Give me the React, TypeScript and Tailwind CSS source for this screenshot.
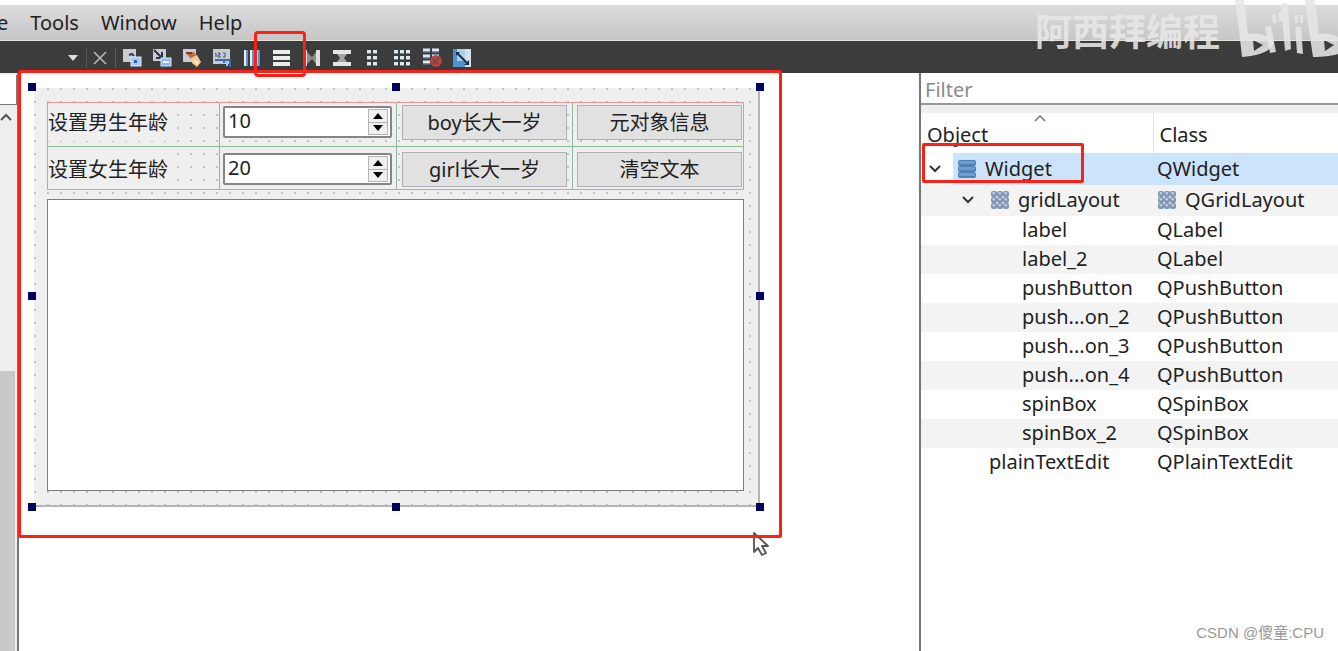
import type { ReactNode } from "react";

const menus = ["Tools", "Window", "Help"];

const tree = [
  { name: "label", type: "QLabel" },
  { name: "label_2", type: "QLabel" },
  { name: "pushButton", type: "QPushButton" },
  { name: "push...on_2", type: "QPushButton" },
  { name: "push...on_3", type: "QPushButton" },
  { name: "push...on_4", type: "QPushButton" },
  { name: "spinBox", type: "QSpinBox" },
  { name: "spinBox_2", type: "QSpinBox" },
];

function GridIcon() {
  return (
    <svg viewBox="0 0 20 20" className="size-5 shrink-0">
      {[1, 7, 13].map((y) =>
        [1, 7, 13].map((x) => (
          <g key={`${x}-${y}`}>
            <rect x={x} y={y} width="6" height="6" rx="2" fill="#8096b4" />
            <rect x={x + 1.5} y={y + 1} width="2.5" height="2.5" rx="1" fill="#c3d1e3" />
          </g>
        )),
      )}
    </svg>
  );
}

function RowsIcon() {
  return (
    <svg viewBox="0 0 20 20" className="size-5 shrink-0">
      {[1, 7, 13].map((y) => (
        <g key={y}>
          <rect x="1" y={y} width="18" height="6" rx="2" fill="#4f80b3" />
          <rect x="2" y={y + 1} width="16" height="3" rx="1" fill="#6c9fd0" />
        </g>
      ))}
    </svg>
  );
}

const tools: { label: string; icon: ReactNode }[] = [
  {
    label: "Edit Widgets",
    icon: (
      <>
        <rect x="1" y="1" width="13" height="13" fill="#c9ccd1" />
        <path d="M7 7l3-1 2 2" stroke="#33415c" strokeWidth="2" fill="none" />
        <rect x="9" y="9" width="10" height="9" fill="#a9c8f5" stroke="#dbe9ff" />
        <rect x="12" y="12" width="3" height="3" fill="#2f5fae" />
      </>
    ),
  },
  {
    label: "Edit Signals/Slots",
    icon: (
      <>
        <rect x="1" y="1" width="13" height="12" fill="#c9ccd1" />
        <path d="M2 2l8 8M10 4v6H4" stroke="#26344f" strokeWidth="2" fill="none" />
        <rect x="9" y="10" width="10" height="8" fill="#8fb8ee" stroke="#d5e5fb" />
        <path d="M11 14h6" stroke="#edf5ff" strokeWidth="2" />
      </>
    ),
  },
  {
    label: "Edit Buddies",
    icon: (
      <>
        <rect x="1" y="1" width="13" height="13" fill="#c9ccd1" />
        <path d="M4 5l8-1 3 5-5 3z" fill="#c4693a" />
        <path d="M4 5h6" stroke="#7c3b24" strokeWidth="2" />
        <path d="M9 10l6-3 4 7-4 5-5-4z" fill="#f6c99a" />
        <path d="M12 12l4 4" stroke="#fff0d8" strokeWidth="2" />
      </>
    ),
  },
  {
    label: "Edit Tab Order",
    icon: (
      <>
        <rect x="1" y="1" width="17" height="15" fill="#c6cbd3" />
        <path d="M3 6l1-1v4M6 5h2v2H6v2h3M11 5h2v4h-2" stroke="#39567f" fill="none" />
        <path d="M3 12h9v3M12 12h6v7" stroke="#3c6bb4" strokeWidth="2" fill="none" />
        <path d="M15 13v5" stroke="#a9c8f5" strokeWidth="2" />
      </>
    ),
  },
  {
    label: "Lay Out Horizontally",
    icon: (
      <>
        {[2, 8, 14].map((x) => (
          <g key={x}>
            <rect x={x} y="2" width="4" height="16" fill="#e8f0f8" />
            <rect x={x + 2} y="2" width="2" height="16" fill="#5d94c8" />
          </g>
        ))}
      </>
    ),
  },
  {
    label: "Lay Out Vertically",
    icon: <path d="M1 4h17M1 10h17M1 16h17" stroke="#ececec" strokeWidth="4" />,
  },
  {
    label: "Lay Out Horizontally in Splitter",
    icon: (
      <>
        <path d="M3 2v16M16 2v16" stroke="#dedede" strokeWidth="4" />
        <path d="M5 4v12l5-5 4 5V4l-4 5z" fill="#8d8d8d" />
      </>
    ),
  },
  {
    label: "Lay Out Vertically in Splitter",
    icon: (
      <>
        <path d="M1 4h18M1 16h18" stroke="#e4e4e4" strokeWidth="4" />
        <path d="M5 6h10l-3 4 3 4H5l3-4z" fill="#a3a3a3" />
      </>
    ),
  },
  {
    label: "Lay Out in a Form",
    icon: (
      <>
        {[2, 8, 14].map((y) => (
          <g key={y}>
            <rect x="5" y={y} width="4" height="3" fill="#dbe9f6" />
            <rect x="11" y={y} width="4" height="3" fill="#dbe9f6" />
            <path d={`M5 ${y + 3.5}h4M11 ${y + 3.5}h4`} stroke="#5c8fbe" />
          </g>
        ))}
      </>
    ),
  },
  {
    label: "Lay Out in a Grid",
    icon: (
      <>
        {[2, 8, 14].map((y) =>
          [2, 8, 14].map((x) => (
            <g key={`${x}-${y}`}>
              <rect x={x} y={y} width="4" height="3" fill="#dbe9f6" />
              <path d={`M${x} ${y + 3.5}h4`} stroke="#5c8fbe" />
            </g>
          )),
        )}
      </>
    ),
  },
  {
    label: "Break Layout",
    icon: (
      <>
        {[1, 7, 13].map((y) => (
          <g key={y}>
            <path d={`M1 ${y + 1}h7M10 ${y + 1}h7`} stroke="#dce9f6" strokeWidth="3" />
            <path d={`M1 ${y + 3}h7M10 ${y + 3}h7`} stroke="#5c8fbe" />
          </g>
        ))}
        <circle cx="14" cy="13" r="6" fill="#b8433c" />
        <path d="M11 16l6-6M11 11l5 5" stroke="#6f4a4e" strokeWidth="1.5" />
      </>
    ),
  },
  {
    label: "Adjust Size",
    icon: (
      <>
        <rect x="1" y="1" width="18" height="18" fill="#4e93cd" />
        <rect x="5" y="1" width="9" height="12" fill="#a9d0ec" />
        <path d="M13 1h6v18h-6z" fill="#d5dfe4" />
        <path d="M5 5l10 10" stroke="#152f4d" strokeWidth="2" />
        <path d="M4 4h4l-4 4zM17 17h-5l5-5z" fill="#152f4d" />
      </>
    ),
  },
];

function Chevron() {
  return (
    <svg viewBox="0 0 12 8" className="w-3 h-2">
      <path d="M1 1l5 5 5-5" stroke="#333" strokeWidth="2" fill="none" />
    </svg>
  );
}

function SpinBox({ id, value }: { id: string; value: number }) {
  return (
    <div className="flex w-[169px] h-8 bg-white border-2 border-[#858585] rounded-xs">
      <input
        id={id}
        type="number"
        defaultValue={value}
        className="flex-1 min-w-0 pl-[3px] pb-0.5 text-xl leading-6 outline-none [appearance:textfield] [&::-webkit-inner-spin-button]:appearance-none"
      />
      <div className="flex flex-col w-5 my-px mr-0.5 border border-[#b5b5b5] divide-y divide-[#b5b5b5] bg-[#f0f0f0]">
        <button aria-label="Increase" className="flex flex-1 items-center justify-center">
          <svg viewBox="0 0 10 6" className="w-2.5 h-1.5">
            <path d="M5 0l5 6H0z" />
          </svg>
        </button>
        <button aria-label="Decrease" className="flex flex-1 items-center justify-center">
          <svg viewBox="0 0 10 6" className="w-2.5 h-1.5">
            <path d="M5 6L0 0h10z" />
          </svg>
        </button>
      </div>
    </div>
  );
}

function FormButton({ children }: { children: ReactNode }) {
  return (
    <button className="w-[165px] h-[35px] bg-[#e1e1e1] border border-[#adb0b6] text-xl leading-6">
      {children}
    </button>
  );
}

function Cell({ className, children }: { className: string; children: ReactNode }) {
  return <div className={`flex border-[#8dbb96] ${className}`}>{children}</div>;
}

function Handle({ className }: { className: string }) {
  return <span className={`absolute size-2 bg-[#000060] ${className}`} />;
}

function Form() {
  return (
    <div className="relative w-[726px] pt-3.5 pb-3.5 pl-[13px] pr-3.5 border-r-2 border-b-2 border-[#b4b4b8] bg-[#efefef] bg-[radial-gradient(circle_at_1px_1px,#c2c2c2_1px,transparent_1px)] bg-[size:13px_13px]">
      <div className="grid grid-cols-[172px_177px_176px_1fr] grid-rows-[44px_42px] border border-[#e59595]">
        <Cell className="items-start pt-0.5 border-r border-b">
          <label htmlFor="boy" className="bg-[#efefef] text-xl leading-9">
            设置男生年龄
          </label>
        </Cell>
        <Cell className="items-start pt-[3px] pl-[3px] border-r border-b">
          <SpinBox id="boy" value={10} />
        </Cell>
        <Cell className="items-start pt-0.5 pl-[5px] border-r border-b">
          <FormButton>boy长大一岁</FormButton>
        </Cell>
        <Cell className="items-start pt-0.5 pl-1 border-b">
          <FormButton>元对象信息</FormButton>
        </Cell>
        <Cell className="items-end pb-px border-r">
          <label htmlFor="girl" className="bg-[#efefef] text-xl leading-9">
            设置女生年龄
          </label>
        </Cell>
        <Cell className="items-end pb-1 pl-[3px] border-r">
          <SpinBox id="girl" value={20} />
        </Cell>
        <Cell className="items-end pb-0.5 pl-[5px] border-r">
          <FormButton>girl长大一岁</FormButton>
        </Cell>
        <Cell className="items-end pb-0.5 pl-1">
          <FormButton>清空文本</FormButton>
        </Cell>
      </div>
      <textarea
        aria-label="plainTextEdit"
        className="block w-full h-[292px] mt-[9px] bg-white border border-[#7d7d7d] resize-none outline-none"
      />
      <Handle className="-top-[5px] -left-1.5" />
      <Handle className="-top-[5px] left-[358px]" />
      <Handle className="-top-[5px] -right-1.5" />
      <Handle className="top-[204px] -left-1.5" />
      <Handle className="top-[204px] -right-1.5" />
      <Handle className="-bottom-1.5 -left-1.5" />
      <Handle className="-bottom-1.5 left-[358px]" />
      <Handle className="-bottom-1.5 -right-1.5" />
      {/* highlight around the whole form */}
      <div className="absolute -top-[18px] -left-4 w-[764px] h-[468px] z-10 border-3 border-[#ff2015] rounded-xs pointer-events-none" />
      <svg viewBox="0 0 18 26" className="absolute -bottom-[52px] -right-3 w-[18px] h-[26px]">
        <path
          d="M2 2v19l4-4 4 7 4-2-4-7h6z"
          fill="#fff"
          stroke="#555"
          strokeWidth="1.8"
          strokeLinejoin="round"
        />
      </svg>
    </div>
  );
}

function ObjectInspector() {
  return (
    <aside className="w-[419px] shrink-0 border-l-2 border-[#777] bg-white">
      <input
        aria-label="Filter"
        placeholder="Filter"
        className="block w-full h-8 px-1 pt-0.5 border-b-2 border-[#999] text-xl leading-6 outline-none placeholder:text-[#8a8a8a]"
      />
      <div className="h-2 bg-[#efefef]" />
      <div className="relative">
        <table className="w-full table-fixed border-collapse text-left text-xl leading-6">
          <thead>
            <tr className="h-10">
              <th className="relative w-[232px] pl-1.5 pt-1 font-normal border-r border-[#e2e2e2]">
                Object
                <svg viewBox="0 0 12 7" className="absolute top-0.5 left-[113px] w-3 h-[7px]">
                  <path d="M1 6l5-5 5 5" stroke="#777" strokeWidth="1.5" fill="none" />
                </svg>
              </th>
              <th className="pl-1.5 pt-1 font-normal">Class</th>
            </tr>
          </thead>
          <tbody>
            <tr className="h-8 bg-[#cce4fb]">
              <td className="p-0">
                <div className="flex items-center h-8">
                  <button
                    aria-label="Collapse Widget"
                    className="flex items-center w-8 h-full pl-2 bg-white"
                  >
                    <Chevron />
                  </button>
                  <span className="flex items-center gap-2 pl-1">
                    <RowsIcon />
                    Widget
                  </span>
                </div>
              </td>
              <td className="p-0 pl-1">QWidget</td>
            </tr>
            <tr className="h-[31px] bg-[#f3f3f3]">
              <td className="p-0 pb-0.5">
                <div className="flex items-center pl-[41px] gap-4">
                  <button aria-label="Collapse gridLayout">
                    <Chevron />
                  </button>
                  <span className="flex items-center gap-2">
                    <GridIcon />
                    gridLayout
                  </span>
                </div>
              </td>
              <td className="p-0 pl-1 pb-0.5">
                <span className="flex items-center gap-2">
                  <GridIcon />
                  QGridLayout
                </span>
              </td>
            </tr>
            {tree.map((item) => (
              <tr key={item.name} className="h-[29px] even:bg-[#f3f3f3]">
                <td className="p-0 pb-0.5 pl-[101px]">{item.name}</td>
                <td className="p-0 pb-0.5 pl-1">{item.type}</td>
              </tr>
            ))}
            <tr className="h-[29px]">
              <td className="p-0 pb-0.5 pl-[68px]">plainTextEdit</td>
              <td className="p-0 pb-0.5 pl-1">QPlainTextEdit</td>
            </tr>
          </tbody>
        </table>
        {/* highlight on the selected row */}
        <div className="absolute top-[30px] left-px w-[162px] h-10 border-3 border-[#ff2015] rounded-xs pointer-events-none" />
      </div>
    </aside>
  );
}

function BiliLogo() {
  return (
    <svg viewBox="0 0 104 60" className="w-[104px] h-[60px]" fill="#e6e6e6" fillOpacity="0.88">
      <path
        d="M1 0h9l4 34c10-2 25 2 25 9 0 7-14 13-31 14L5 30zM19 40l1 11 9-6z"
        fillRule="evenodd"
      />
      <path d="M31 27l6-1 5 26-6 1zM47 5q4-5 7 0l3 44-6 2zM61 27h6l2 27-6-1z" />
      <path d="M38 15l4-1 1 8-4 2zM44 13l4-1v9l-3 1zM61 15h3v8h-3zM66 15h3v8h-3z" />
      <path
        d="M71 0h10l4 34c8-1 15 0 19 3v17c-6 2-15 3-25 3L75 30zM90 40l1 11 9-6z"
        fillRule="evenodd"
      />
    </svg>
  );
}

export default function App() {
  return (
    <div className="relative flex flex-col min-h-screen overflow-hidden bg-white text-[#222] font-['Noto_Sans','Noto_Sans_CJK_SC',sans-serif]">
      <nav className="flex items-center gap-[22px] h-9 mt-[5px] bg-linear-to-b from-[#dcdcdc] to-[#c6c6c6] border-b border-[#e2e2e2] text-xl leading-6">
        <button className="-ml-[3px]">e</button>
        {menus.map((menu) => (
          <button key={menu}>{menu}</button>
        ))}
      </nav>

      <div className="flex items-center h-8 pt-0.5 pl-[68px] bg-[#3c3c3c]">
        <button aria-label="Open documents">
          <svg viewBox="0 0 10 6" className="w-2.5 h-1.5">
            <path d="M0 0h10L5 6z" fill="#ddd" />
          </svg>
        </button>
        <span className="w-px h-5 ml-2 bg-[#5a5a5a]" />
        <button aria-label="Close document" className="ml-1.5">
          <svg viewBox="0 0 14 14" className="size-3.5">
            <path d="M1 1l12 12M13 1L1 13" stroke="#bbb" strokeWidth="1.5" />
          </svg>
        </button>
        <span className="w-px h-5 ml-2 mr-1.5 bg-[#5a5a5a]" />
        <div className="flex gap-2.5">
          {tools.map((tool) => (
            <button key={tool.label} aria-label={tool.label} className="relative">
              <svg viewBox="0 0 20 20" className="size-5">
                {tool.icon}
              </svg>
              {tool.label === "Lay Out Vertically" && (
                <span className="absolute -top-[17px] -left-[18px] w-[52px] h-[46px] z-20 border-3 border-[#ff2015] rounded-sm pointer-events-none" />
              )}
            </button>
          ))}
        </div>
      </div>

      <main className="flex flex-1">
        <div className="flex flex-col w-[19px] shrink-0 pt-0.5 border-r-2 border-[#777] bg-[#efefef]">
          <div className="h-[30px] bg-white border-r border-b border-[#777]" />
          <button aria-label="Scroll up" className="h-[266px] flex items-start pt-2">
            <svg viewBox="0 0 12 8" className="w-3 h-2">
              <path d="M1 7l5-5 5 5" stroke="#555" strokeWidth="2" fill="none" />
            </svg>
          </button>
          <div className="flex-1 mr-0.5 bg-[#c9c9c9]" />
        </div>
        <section className="flex-1 pt-[15px] pl-[15px]">
          <Form />
        </section>
        <ObjectInspector />
      </main>

      <div className="absolute top-0 right-0 flex items-start gap-3.5 pointer-events-none">
        <span className="pt-3 text-[37px] leading-10 font-bold text-[#e8e8e8]/90">阿西拜编程</span>
        <BiliLogo />
      </div>
      <span className="absolute bottom-2 right-3.5 text-[15px] leading-5 text-[#999] font-['Liberation_Sans','Noto_Sans_CJK_SC',sans-serif]">
        CSDN @傻童:CPU
      </span>
    </div>
  );
}
